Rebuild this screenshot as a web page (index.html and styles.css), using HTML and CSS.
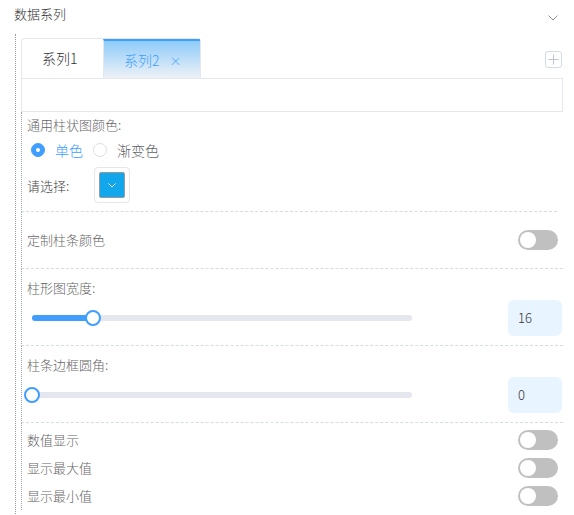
FILE: index.html
```html
<!DOCTYPE html>
<html lang="zh-CN">
<head>
  <meta charset="UTF-8">
  <meta name="viewport" content="width=device-width, initial-scale=1.0">
  <title>数据系列</title>
  <link rel="stylesheet" href="styles.css">
</head>
<body>

<div class="panel">
  <div class="panel-head">
    <span class="panel-title">数据系列</span>
    <svg class="chevron" width="10" height="6" viewBox="0 0 10 6">
      <path d="M0.5 0.5 L5 5 L9.5 0.5" fill="none" stroke="#909399" stroke-width="1"/>
    </svg>
  </div>

  <div class="panel-body">
    <!-- 系列切换 -->
    <div class="tabs">
      <div class="tabs-head">
        <div class="tabs-nav">
          <div class="tab">系列1</div>
          <div class="tab active">系列2<span class="tab-close">×</span></div>
        </div>
        <span class="tab-add">
          <svg width="11" height="11" viewBox="0 0 11 11">
            <path d="M5.5 0.5 V10.5 M0.5 5.5 H10.5" stroke="#c0c4cc" stroke-width="1"/>
          </svg>
        </span>
      </div>
      <div class="tabs-content"></div>
    </div>

    <div class="group group-color">
      <div class="group-label">通用柱状图颜色:</div>
      <div class="radio-row">
        <label class="radio checked"><span class="radio-dot"></span>单色</label>
        <label class="radio"><span class="radio-dot"></span>渐变色</label>
      </div>
      <div class="picker-row">
        <span class="picker-label">请选择:</span>
        <span class="picker">
          <span class="picker-color">
            <svg width="8" height="5" viewBox="0 0 8 5">
              <path d="M0.5 0.5 L4 4 L7.5 0.5" fill="none" stroke="#fff" stroke-width="1"/>
            </svg>
          </span>
        </span>
      </div>
    </div>

    <div class="group group-switch">
      <span class="group-label">定制柱条颜色</span>
      <span class="switch"></span>
    </div>

    <div class="group group-slider">
      <div class="group-label">柱形图宽度:</div>
      <div class="slider-row">
        <div class="slider">
          <div class="slider-track"></div>
          <div class="slider-fill" style="width: 16%"></div>
          <div class="slider-thumb" style="left: 16%"></div>
        </div>
        <div class="num-input">16</div>
      </div>
    </div>

    <div class="group group-slider">
      <div class="group-label">柱条边框圆角:</div>
      <div class="slider-row">
        <div class="slider">
          <div class="slider-track"></div>
          <div class="slider-fill" style="width: 0%"></div>
          <div class="slider-thumb" style="left: 0%"></div>
        </div>
        <div class="num-input">0</div>
      </div>
    </div>

    <div class="group group-list">
      <div class="list-row">
        <span class="group-label">数值显示</span>
        <span class="switch"></span>
      </div>
      <div class="list-row">
        <span class="group-label">显示最大值</span>
        <span class="switch"></span>
      </div>
      <div class="list-row">
        <span class="group-label">显示最小值</span>
        <span class="switch"></span>
      </div>
    </div>
  </div>
</div>

</body>
</html>
```

FILE: styles.css
```css
body {
  margin: 0;
  padding: 0;
  background-color: #fff;
  font-family: "Noto Sans CJK SC", "Noto Sans", sans-serif;
  font-weight: 300;
  color: #333;
}
.panel-head {
  display: flex;
  justify-content: space-between;
  align-items: flex-start;
  height: 34px;
  box-sizing: border-box;
  padding: 5px 16px 0 14px;
}
.panel-title {
  font-size: 13px;
  line-height: 18px;
  color: #333;
}
.chevron {
  margin-top: 10px;
}
.panel-body {
  margin-left: 15px;
  border-left: 1px dotted #8e9aae;
  padding: 4px 11px 10px 5px;
}

/* tabs */
.tabs-head {
  display: flex;
  justify-content: space-between;
  align-items: flex-start;
  height: 41px;
  box-sizing: border-box;
  border-bottom: 1px solid #e4e7ed;
}
.tabs-nav {
  display: flex;
  height: 40px;
  box-sizing: border-box;
  border: 1px solid #e4e7ed;
  border-bottom: none;
  border-radius: 4px 4px 0 0;
}
.tab {
  width: 81px;
  height: 39px;
  box-sizing: border-box;
  padding-left: 20px;
  line-height: 39px;
  font-size: 14px;
  color: #303133;
}
.tab.active {
  width: 97px;
  border-left: 1px solid #e4e7ed;
  border-top: 2px solid #409eff;
  padding-top: 2px;
  line-height: 35px;
  color: #409eff;
  background: linear-gradient(to bottom, #8ecbf9, #eef2f7);
}
.tab-close {
  font-size: 12px;
  margin-left: 10px;
}
.tab-add {
  display: flex;
  align-items: center;
  justify-content: center;
  width: 17px;
  height: 17px;
  box-sizing: border-box;
  margin: 13px 1px 0 0;
  border: 1px solid #d3dce6;
  border-radius: 3px;
}
.tabs-content {
  height: 33px;
  box-sizing: border-box;
  border: 1px solid #e4e7ed;
  border-top: none;
}

/* form groups */
.group {
  border-left: 1px dotted #98a3b4;
  border-bottom: 1px dashed #d6dce5;
  padding-left: 5px;
}
.group-label {
  font-size: 13px;
  line-height: 18px;
  color: #666;
}
.group-color {
  padding-top: 4px;
  padding-bottom: 8px;
  margin-right: 6px;
}
.radio-row {
  display: flex;
  align-items: center;
  height: 20px;
  margin: 6px 0 0 4px;
}
.radio {
  display: flex;
  align-items: center;
  font-size: 14px;
  color: #606266;
  margin-right: 10px;
}
.radio.checked {
  color: #409eff;
}
.radio-dot {
  width: 14px;
  height: 14px;
  box-sizing: border-box;
  border: 1px solid #dcdfe6;
  border-radius: 50%;
  margin-right: 10px;
  background-color: #fff;
  position: relative;
}
.radio.checked .radio-dot {
  border-color: #409eff;
  background-color: #409eff;
}
.radio.checked .radio-dot::after {
  content: "";
  position: absolute;
  left: 4px;
  top: 4px;
  width: 4px;
  height: 4px;
  border-radius: 50%;
  background-color: #fff;
}
.picker-row {
  display: flex;
  align-items: center;
  margin-top: 7px;
}
.picker-label {
  width: 67px;
  font-size: 13px;
  color: #444;
}
.picker {
  display: flex;
  align-items: center;
  justify-content: center;
  width: 36px;
  height: 36px;
  box-sizing: border-box;
  border: 1px solid #e6e6e6;
  border-radius: 4px;
}
.picker-color {
  display: flex;
  align-items: center;
  justify-content: center;
  width: 26px;
  height: 26px;
  box-sizing: border-box;
  border: 1px solid #999;
  border-radius: 2px;
  background-color: #12a7ec;
}

/* switches */
.group-switch {
  display: flex;
  justify-content: space-between;
  align-items: center;
  padding-top: 18px;
  padding-bottom: 18px;
}
.switch {
  width: 40px;
  height: 20px;
  border-radius: 10px;
  background-color: #c0c0c0;
  margin-right: 5px;
  position: relative;
}
.switch::after {
  content: "";
  position: absolute;
  left: 2px;
  top: 2px;
  width: 16px;
  height: 16px;
  border-radius: 50%;
  background-color: #fff;
}

/* sliders */
.group-slider {
  padding-top: 10px;
  padding-bottom: 9px;
}
.slider-row {
  display: flex;
  justify-content: space-between;
  align-items: center;
  margin-top: 3px;
}
.slider {
  width: 380px;
  height: 16px;
  margin-left: 5px;
  position: relative;
}
.slider-track, .slider-fill {
  position: absolute;
  left: 0;
  top: 5px;
  height: 6px;
  border-radius: 3px;
}
.slider-track {
  width: 100%;
  background-color: #e4e7ed;
}
.slider-fill {
  background-color: #409eff;
}
.slider-thumb {
  position: absolute;
  top: 0;
  width: 16px;
  height: 16px;
  box-sizing: border-box;
  margin-left: -8px;
  border: 2px solid #409eff;
  border-radius: 50%;
  background-color: #fff;
}
.num-input {
  width: 54px;
  height: 36px;
  box-sizing: border-box;
  margin-right: 1px;
  padding-left: 10px;
  line-height: 36px;
  font-size: 13px;
  color: #333;
  background-color: #e8f4ff;
  border-radius: 6px;
}

/* toggles list */
.group-list {
  border-bottom: none;
  padding-top: 3px;
}
.list-row {
  display: flex;
  justify-content: space-between;
  align-items: center;
  height: 28px;
}
```
